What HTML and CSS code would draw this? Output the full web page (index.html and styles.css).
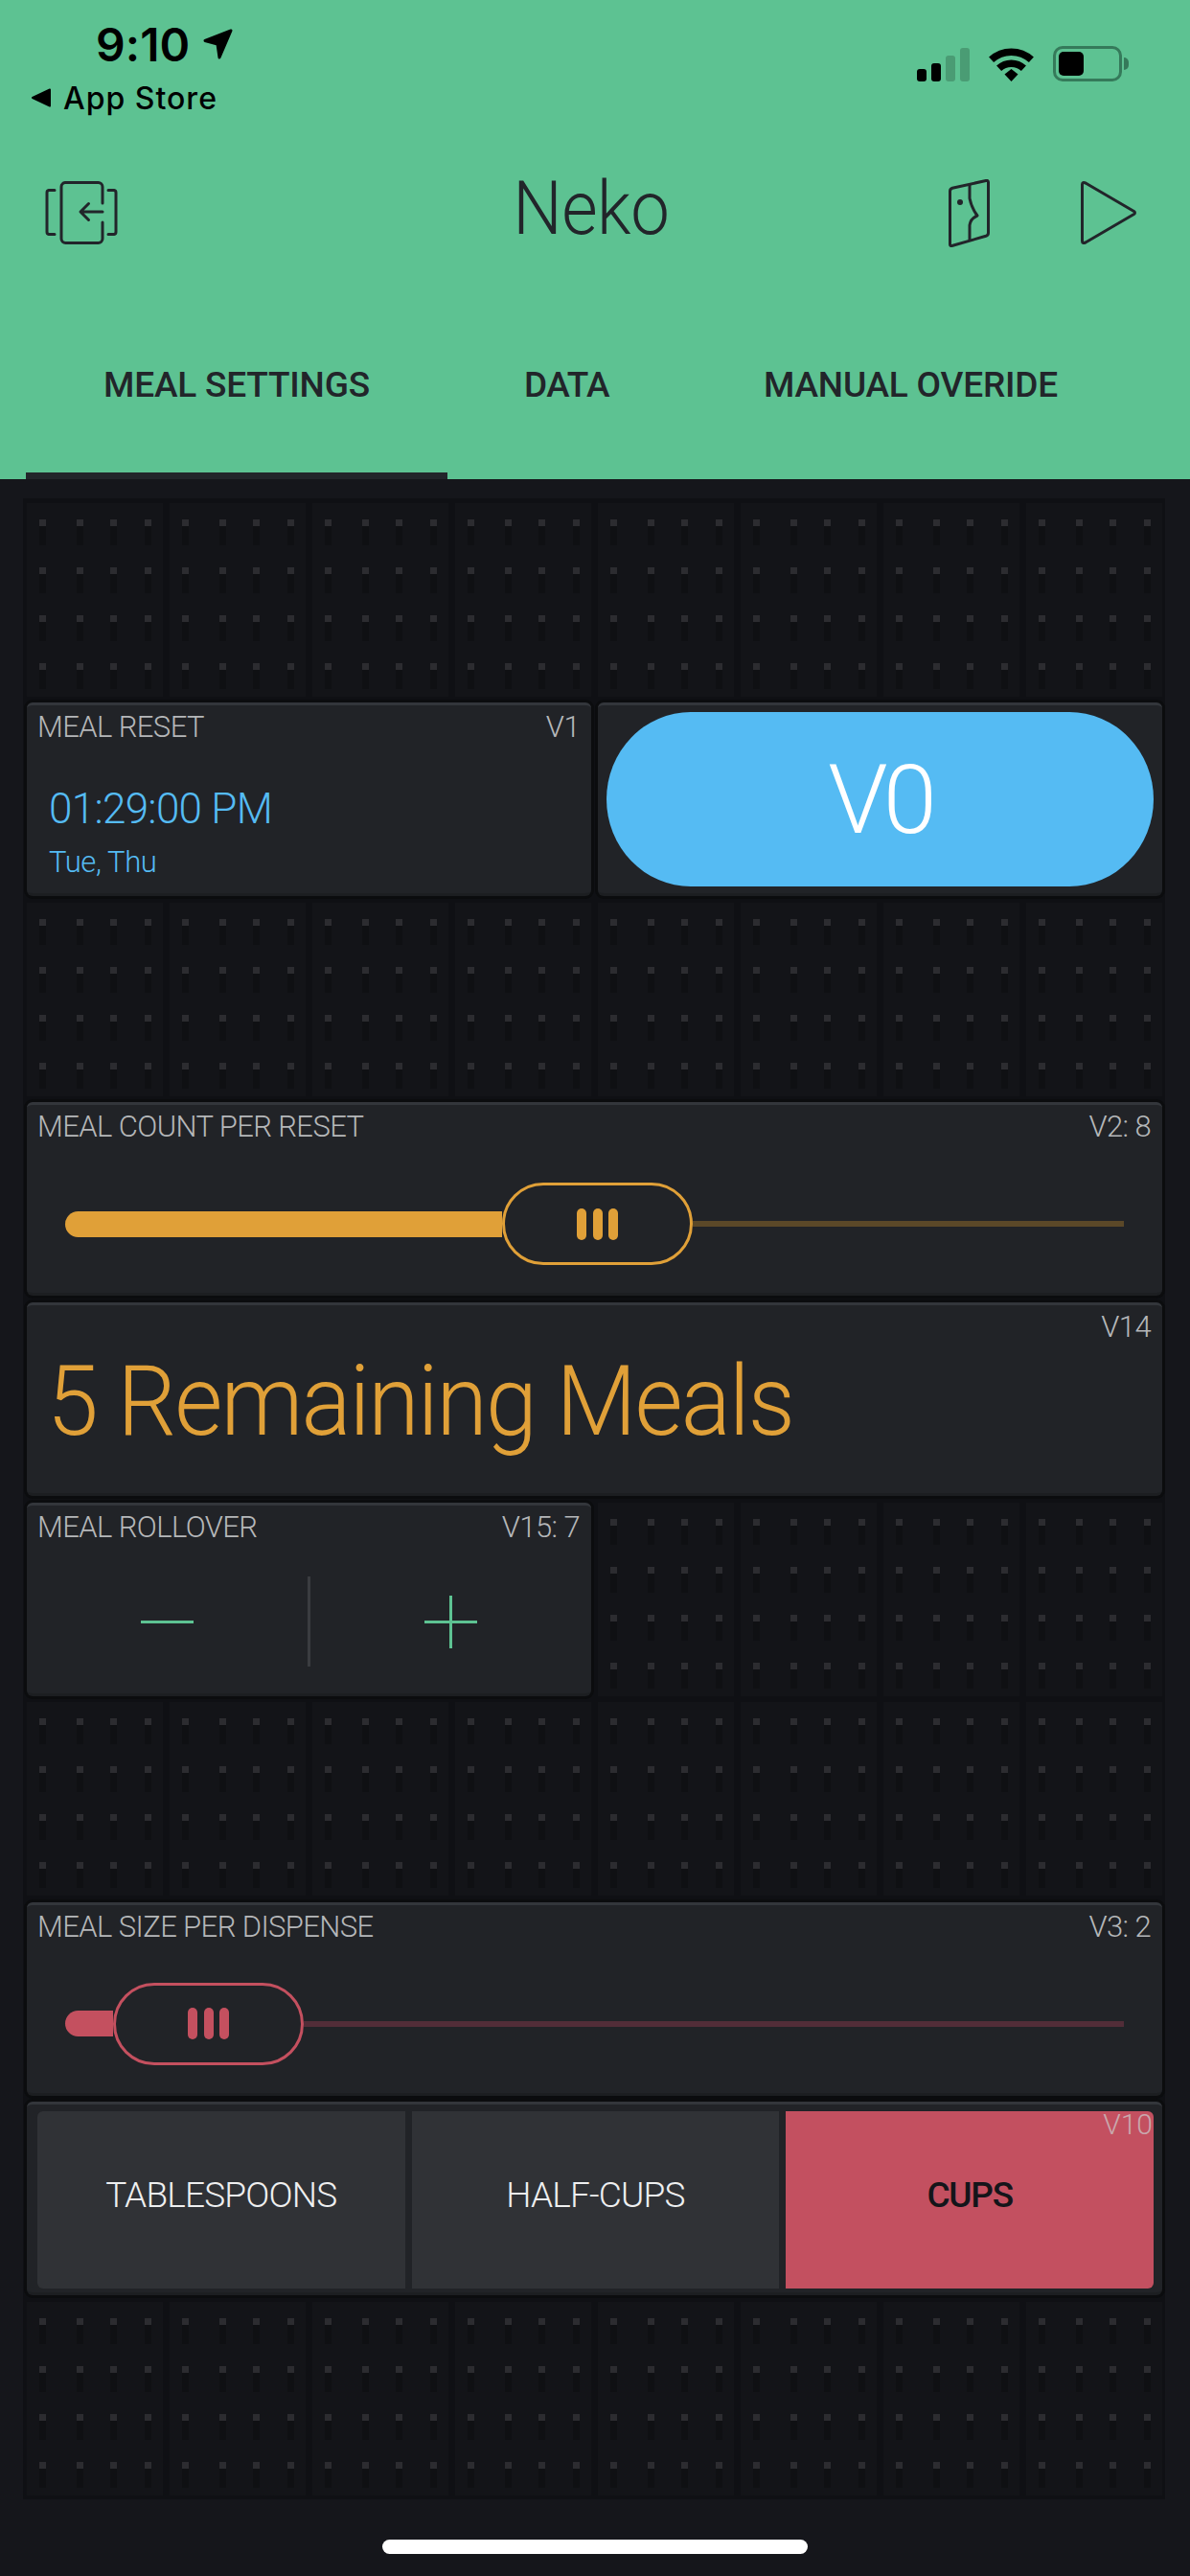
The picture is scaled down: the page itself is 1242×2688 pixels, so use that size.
FILE: index.html
```html
<!DOCTYPE html>
<html lang="en">
<head>
<meta charset="utf-8">
<title>Neko</title>
<link rel="stylesheet" href="styles.css">
</head>
<body>
<div class="screen">
  <header class="header">
    <div class="status">
      <div class="status-left">
        <div class="clock">
          <span class="time">9:10</span>
          <svg class="loc" viewBox="0 0 31 32"><path d="M29 2 2 12.500 15 16 17 30Z" fill="#000" stroke="#000" stroke-width="3" stroke-linejoin="round"/></svg>
        </div>
        <div class="back-app">
          <svg class="back-tri" viewBox="0 0 22 20"><path d="M20 1.500 2 10l18 8.500Z" fill="#000" stroke="#000" stroke-width="2" stroke-linejoin="round"/></svg>
          <span class="app-store">App Store</span>
        </div>
      </div>
      <div class="status-right">
        <div class="signal">
          <span class="bar bar1"></span><span class="bar bar2"></span><span class="bar bar3 dim"></span><span class="bar bar4 dim"></span>
        </div>
        <svg class="wifi" viewBox="0 0 47 36" fill="none" stroke="#000" stroke-width="7.500">
          <path d="M2.600 13.300A31 31 0 0 1 44.400 13.300"/>
          <path d="M10.600 22.300A19 19 0 0 1 36.400 22.300"/>
          <path d="M16.500 28.500 23.500 23 30.500 28.500 23.500 36Z" fill="#000" stroke="none"/>
        </svg>
        <div class="battery"><span class="battery-fill"></span></div>
        <span class="battery-nub"></span>
      </div>
    </div>
    <nav class="toolbar">
      <svg class="ico-back" viewBox="0 0 76 66" fill="none" stroke="#22252a" stroke-width="3" stroke-linecap="round" stroke-linejoin="round">
        <path d="M10 9.500H4a2.500 2.500 0 0 0-2 2.500v41a2.500 2.500 0 0 0 2 2.500h6"/>
        <path d="M66 9.500h6a2.500 2.500 0 0 1 2 2.500v41a2.500 2.500 0 0 1-2 2.500h-6"/>
        <path d="M60 23V6a4.500 4.500 0 0 0-4.500-4.500H21A4.500 4.500 0 0 0 17 6v54a4.500 4.500 0 0 0 4.500 4.500H55.500A4.500 4.500 0 0 0 60 60V43"/>
        <path d="M60 32H37.500M45.500 23.500 37 32l8.500 8.500"/>
      </svg>
      <h1 class="title">Neko</h1>
      <div class="tools">
        <svg class="ico-door" viewBox="0 0 43 71" fill="none" stroke="#22252a" stroke-width="3" stroke-linejoin="round">
          <path d="M1.500 12.500Q1.500 10 4 9.300L39 1.500Q41.500 1 41.500 3.500V56Q41.500 58.500 39 59.300L3.500 69.500Q1.500 70 1.500 68Z"/>
          <path d="M22 6V20Q24 30 30 38Q23 41 22 48V64"/>
          <circle cx="12" cy="24" r="3" fill="#22252a" stroke="none"/>
        </svg>
        <svg class="ico-play" viewBox="0 0 58 66" fill="none" stroke="#22252a" stroke-width="3" stroke-linejoin="round">
          <path d="M1.500 3.500Q1.500 .500 5 2L55.500 31.500Q57.500 33 55.500 34.500L5 64Q1.500 65.500 1.500 62.500Z"/>
        </svg>
      </div>
    </nav>
    <div class="tabs">
      <div class="tab tab-active"><span class="tab-text">MEAL SETTINGS</span></div>
      <div class="tab tab-data"><span class="tab-text">DATA</span></div>
      <div class="tab tab-manual"><span class="tab-text">MANUAL OVERIDE</span></div>
    </div>
  </header>

  <main class="canvas">
    <div class="board">
      <div class="cell"></div><div class="cell"></div><div class="cell"></div><div class="cell"></div>
      <div class="cell"></div><div class="cell"></div><div class="cell"></div><div class="cell"></div>

      <section class="card span4">
        <div class="card-head"><span>MEAL RESET</span><span>V1</span></div>
        <div class="timer-time">01:29:00 PM</div>
        <div class="timer-days">Tue, Thu</div>
      </section>
      <section class="card span4 button-card">
        <div class="pill"><span class="pill-text">V0</span></div>
      </section>

      <div class="cell"></div><div class="cell"></div><div class="cell"></div><div class="cell"></div>
      <div class="cell"></div><div class="cell"></div><div class="cell"></div><div class="cell"></div>

      <section class="card span8">
        <div class="card-head"><span>MEAL COUNT PER RESET</span><span>V2: 8</span></div>
        <div class="slider amber">
          <span class="fill fill-count"></span>
          <span class="thumb"><i></i><i></i><i></i></span>
          <span class="rest"></span>
        </div>
      </section>

      <section class="card span8">
        <div class="card-head card-head-end"><span>V14</span></div>
        <div class="display">5 Remaining Meals</div>
      </section>

      <section class="card span4">
        <div class="card-head"><span>MEAL ROLLOVER</span><span>V15: 7</span></div>
        <div class="stepper">
          <div class="step"><span class="minus"></span></div>
          <span class="divider"></span>
          <div class="step"><span class="plus"></span></div>
        </div>
      </section>
      <div class="cell"></div><div class="cell"></div><div class="cell"></div><div class="cell"></div>

      <div class="cell"></div><div class="cell"></div><div class="cell"></div><div class="cell"></div>
      <div class="cell"></div><div class="cell"></div><div class="cell"></div><div class="cell"></div>

      <section class="card span8">
        <div class="card-head"><span>MEAL SIZE PER DISPENSE</span><span>V3: 2</span></div>
        <div class="slider rose">
          <span class="fill fill-size"></span>
          <span class="thumb"><i></i><i></i><i></i></span>
          <span class="rest"></span>
        </div>
      </section>

      <section class="card span8 seg-card">
        <div class="seg"><span>TABLESPOONS</span></div>
        <div class="seg"><span>HALF-CUPS</span></div>
        <div class="seg seg-on"><span>CUPS</span></div>
        <span class="seg-pin">V10</span>
      </section>

      <div class="cell"></div><div class="cell"></div><div class="cell"></div><div class="cell"></div>
      <div class="cell"></div><div class="cell"></div><div class="cell"></div><div class="cell"></div>
    </div>
    <div class="home-bar"></div>
  </main>
</div>
</body>
</html>
```
FILE: styles.css
```css
* { box-sizing: border-box; }
html, body { margin: 0; padding: 0; background: #15161b; }
body { font-family: Roboto, "Liberation Sans", sans-serif; }
.screen { width: 1242px; height: 2688px; overflow: hidden; display: flex; flex-direction: column; }

.header { height: 500px; background: #5dc292; color: #22252a; display: flex; flex-direction: column; }

.status { height: 152px; display: flex; justify-content: space-between; }
.status-left { padding: 20px 0 0 32px; }
.clock { display: flex; align-items: center; padding-left: 68px; height: 52px; }
.time { font-family: Inter, Roboto, sans-serif; font-weight: 600; font-size: 48px; letter-spacing: .1px; color: #000; }
.loc { width: 31px; height: 32px; margin-left: 14px; }
.back-app { display: flex; align-items: center; margin-top: 10px; height: 40px; }
.back-tri { width: 22px; height: 20px; }
.app-store { font-family: Inter, Roboto, sans-serif; font-weight: 500; font-size: 32px; letter-spacing: 1px; color: #000; margin-left: 12px; }

.status-right { display: flex; align-items: flex-end; padding: 0 64px 67px 0; height: 152px; }
.signal { display: flex; align-items: flex-end; gap: 5px; height: 35px; }
.bar { width: 10px; background: #000; border-radius: 3px; }
.bar1 { height: 13px; }
.bar2 { height: 19px; }
.bar3 { height: 27px; }
.bar4 { height: 35px; }
.dim { background: #4a9c74; }
.wifi { width: 47px; height: 36px; margin-left: 20px; }
.battery { width: 72px; height: 37px; margin-left: 20px; border: 3px solid #357a5a; border-radius: 10px; padding: 3px; }
.battery-fill { display: block; width: 26px; height: 25px; background: #000; border-radius: 5px; }
.battery-nub { width: 5px; height: 13px; margin: 0 0 12px 2px; background: #357a5a; border-radius: 0 6px 6px 0; }

.toolbar { height: 140px; display: grid; grid-template-columns: 1fr auto 1fr; align-items: center; padding: 0 56px 0 47px; }
.ico-back { width: 76px; height: 66px; }
.title { margin: -7px 0 0; font-weight: 300; font-size: 77px; letter-spacing: -.5px; line-height: 1; transform: scaleX(.94); }
.tools { display: flex; align-items: center; justify-content: flex-end; gap: 95px; }
.ico-door { width: 43px; height: 71px; }
.ico-play { width: 58px; height: 66px; }

.tabs { flex: 1; display: flex; align-items: stretch; padding-left: 27px; }
.tab { display: flex; align-items: center; justify-content: center; font-weight: 500; font-size: 37px; letter-spacing: -.2px; padding-top: 17px; }
.tab-active { width: 440px; border-bottom: 7px solid #22252a; }
.tab-data { margin-left: 80px; padding-bottom: 7px; letter-spacing: -.6px; }
.tab-manual { margin-left: 161px; padding-bottom: 7px; }

.canvas { flex: 1; padding-top: 20px; display: flex; flex-direction: column; align-items: flex-start; }
.board {
  margin-left: 24px;
  width: 1192px;
  padding: 4.600px 3px 4px 4px;
  background: #0f1014;
  display: grid;
  grid-template-columns: repeat(8, 142px);
  grid-auto-rows: 202px;
  gap: 6.600px 7px;
}
.cell {
  background-color: #131418;
  background-image:
    linear-gradient(#2c2c30 0 7px, #0f1013 7px 27px, transparent 27px),
    linear-gradient(#2c2c30 0 7px, #0f1013 7px 27px, transparent 27px),
    linear-gradient(#2c2c30 0 7px, #0f1013 7px 27px, transparent 27px),
    linear-gradient(#2c2c30 0 7px, #0f1013 7px 27px, transparent 27px);
  background-size: 7px 50px;
  background-repeat: repeat-y;
  background-position: 12.500px 17px, 51.500px 17px, 86.500px 17px, 122.500px 17px;
}
.card {
  position: relative;
  background: #212327;
  border-top: 3px solid #33363b;
  border-bottom: 3px solid #1c1e21;
  border-radius: 6px;
  box-shadow: 0 0 0 3px #0b0c0e;
  color: #b5b7b9;
  display: flex;
  flex-direction: column;
}
.span4 { grid-column: span 4; }
.span8 { grid-column: span 8; }

.card-head { display: flex; justify-content: space-between; padding: 5px 12px 0 11px; font-weight: 300; font-size: 31px; line-height: 36px; letter-spacing: -.6px; }
.card-head-end { justify-content: flex-end; }

.timer-time { margin: 41px 0 0 23px; font-weight: 300; font-size: 44px; line-height: 52px; color: #55bbf3; letter-spacing: -.7px; }
.timer-days { margin: 12px 0 0 23px; font-weight: 300; font-size: 31px; line-height: 36px; color: #55bbf3; letter-spacing: -.4px; }

.button-card { padding: 7px 9px; }
.pill { flex: 1; background: #55bbf3; border-radius: 88px / 91px; display: flex; align-items: center; justify-content: center; }
.pill-text { color: #fff; font-weight: 300; font-size: 101px; line-height: 1; letter-spacing: -5px; }

.slider { display: flex; align-items: center; padding: 0 40px; margin-top: 40px; height: 86px; }
.thumb { height: 86px; border: 3px solid; border-radius: 43px; display: flex; align-items: center; justify-content: center; gap: 6.500px; flex: none; width: 199px; }
.thumb i { width: 10px; height: 33px; border-radius: 5px; }
.fill { height: 27px; border-radius: 14px 0 0 14px; flex: none; }
.fill-count { width: 456px; }
.fill-size { width: 50px; }
.rest { height: 6px; flex: 1; }
.amber .thumb { border-color: #e0a038; }
.amber .thumb i, .amber .fill { background: #e0a038; }
.amber .rest { background: #5b4828; }
.rose .thumb { border-color: #c4505f; }
.rose .thumb i, .rose .fill { background: #c4505f; }
.rose .rest { background: #522d38; }

.display { margin: -1px 0 0 21px; font-weight: 300; font-size: 102px; line-height: 120px; color: #e0a038; letter-spacing: -2px; transform: scaleX(.95); transform-origin: left center; }

.stepper { flex: 1; display: flex; align-items: center; padding-top: 6px; }
.step { flex: 1; display: flex; justify-content: center; }
.divider { width: 3px; height: 94px; background: #3a3c40; }
.minus { display: block; width: 55px; height: 3px; background: #5dc292; }
.plus { display: block; width: 55px; height: 55px; background: linear-gradient(#5dc292, #5dc292) center / 55px 3px no-repeat, linear-gradient(#5dc292, #5dc292) center / 3px 55px no-repeat; }

.seg-card { flex-direction: row; padding: 7px 9px 4px 11px; gap: 7px; }
.seg { flex: 1; background: #303236; display: flex; align-items: center; justify-content: center; padding-bottom: 10px; color: #eeeff0; font-weight: 300; font-size: 37px; letter-spacing: -.8px; }
.seg:first-child { border-radius: 6px 0 0 6px; }
.seg-on { background: #c35060; color: #14151a; font-weight: 500; letter-spacing: -1.200px; border-radius: 0 6px 6px 0; }
.seg-pin { position: absolute; top: 3px; right: 10px; font-weight: 300; font-size: 30px; line-height: 36px; color: #c9a8ad; }

.home-bar { width: 444px; height: 15px; background: #fff; border-radius: 8px; margin: 42px 0 0 399px; }
```
